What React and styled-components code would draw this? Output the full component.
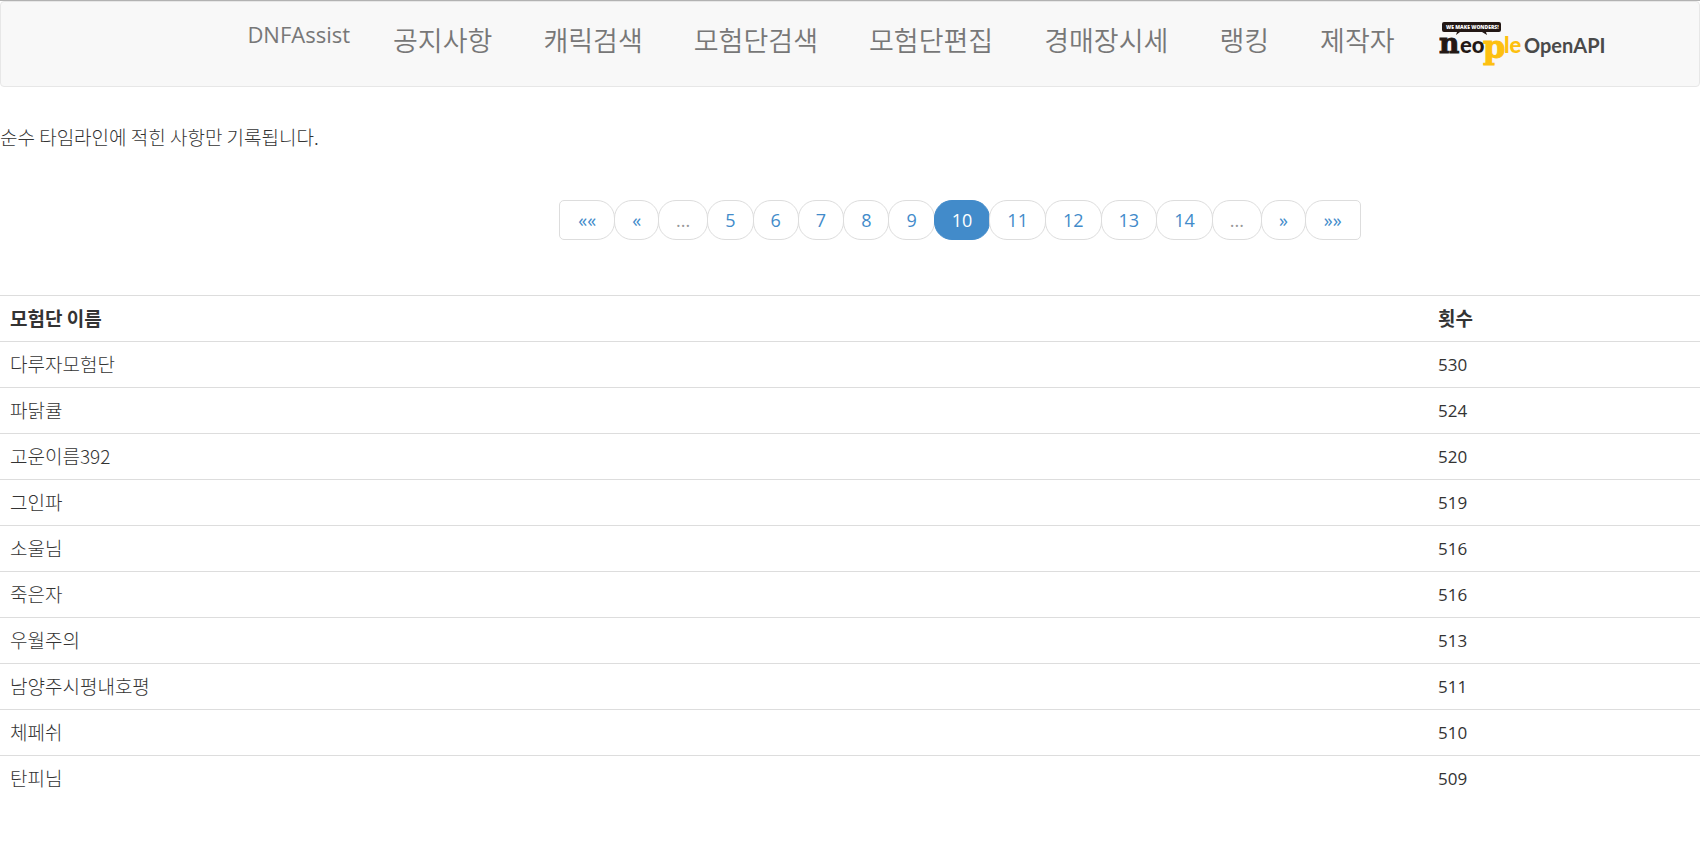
import styled, { createGlobalStyle } from 'styled-components'

const GlobalStyle = createGlobalStyle`
  * {
    box-sizing: border-box;
  }

  body {
    margin: 0;
    background-color: #fff;
    color: #333;
    font-family: "Noto Sans CJK KR", sans-serif;
    font-size: 19px;
    font-weight: 300;
    line-height: 25px;
  }

  a {
    text-decoration: none;
  }
`

const Page = styled.div`
  border-top: 1px solid #b2b2b2;
`

const Nav = styled.nav`
  display: flex;
  justify-content: center;
  padding-left: 152px;
  height: 86px;
  border: 1px solid #e7e7e7;
  border-radius: 4px;
  background-color: #f8f8f8;
`

const Brand = styled.a`
  padding: 17px 18px 0 0;
  color: #777;
  font-family: "Open Sans", sans-serif;
  font-size: 22px;
  font-weight: 400;
  line-height: 30px;
`

const Menu = styled.ul`
  display: flex;
  gap: 1px;
  margin: 0;
  padding: 0;
  list-style: none;
`

const MenuLink = styled.a`
  display: block;
  padding: 18px 25px;
  color: #777;
  font-size: 27px;
  font-weight: 350;
  line-height: 40px;
`

const LogoLink = styled.a`
  padding-top: 18px;
  margin-left: 19px;
`

const Notice = styled.p`
  margin: 37px 0 51px;
`

const Pages = styled.nav`
  display: flex;
  justify-content: center;
  padding-left: 220px;
  margin-bottom: 55px;
`

const PageList = styled.ul`
  display: flex;
  margin: 0;
  padding: 0;
  list-style: none;
`

const PageItem = styled.li`
  & + & {
    margin-left: -1px;
  }

  &:first-child button {
    padding: 0 18px;
    border-top-left-radius: 5px;
    border-bottom-left-radius: 5px;
  }

  &:last-child button {
    padding: 0 18px;
    border-top-right-radius: 5px;
    border-bottom-right-radius: 5px;
  }
`

const PageButton = styled.button`
  height: 40px;
  padding: 0 17px;
  border: 1px solid ${props => props.$active ? '#428bca' : '#ddd'};
  border-radius: 18px;
  background-color: ${props => props.$active ? '#428bca' : '#fff'};
  color: ${props => props.$active ? '#fff' : '#428bca'};
  font-family: "Open Sans", sans-serif;
  font-size: 18px;
  line-height: 25px;
  cursor: pointer;

  &:disabled {
    color: #999;
    cursor: default;
  }
`

const Table = styled.table`
  width: 100%;
  border-collapse: collapse;
  table-layout: fixed;
`

const Th = styled.th`
  width: ${props => props.$width};
  padding: 9px 10px 11px;
  border-top: 1px solid #ddd;
  font-weight: 700;
  text-align: left;
`

const Td = styled.td`
  padding: 9px 10px 11px;
  border-top: 1px solid #ddd;
`

const CountTd = styled(Td)`
  padding: 10px;
  font-family: "Open Sans", sans-serif;
  font-size: 17px;
  font-weight: 400;
`

const menus = ['공지사항', '캐릭검색', '모험단검색', '모험단편집', '경매장시세', '랭킹', '제작자']

const pages = ['««', '«', '...', '5', '6', '7', '8', '9', '10', '11', '12', '13', '14', '...', '»', '»»']

const guilds = [
  { name: '다루자모험단', count: 530 },
  { name: '파닭큘', count: 524 },
  { name: '고운이름392', count: 520 },
  { name: '그인파', count: 519 },
  { name: '소울님', count: 516 },
  { name: '죽은자', count: 516 },
  { name: '우월주의', count: 513 },
  { name: '남양주시평내호평', count: 511 },
  { name: '체페쉬', count: 510 },
  { name: '탄피님', count: 509 },
]

const NeopleLogo = () => {
  return (
    <svg width="166" height="50" viewBox="0 0 166 50" role="img" aria-label="Neople OpenAPI">
      <path d="M5 2h55q2 0 2 2v6q0 2-2 2h-13l1 3-5-3H21l-4 3 1-3H5q-2 0-2-2V4q0-2 2-2z" fill="#231815" />
      <text x="7" y="9" fontFamily="Open Sans" fontSize="5" fontWeight="800" fill="#fff">WE MAKE WONDERS!</text>
      <text x="0" y="33" fontFamily="DejaVu Serif" fontSize="28" fontWeight="700" fill="#231815" stroke="#231815">n</text>
      <text x="21" y="33" fontFamily="Lato" fontSize="22" fontWeight="900" fill="#231815">eo</text>
      <text x="44" y="38" fontFamily="DejaVu Serif" fontSize="32" fontWeight="700" fill="#fdc010" stroke="#fdc010">p</text>
      <text x="65" y="33" fontFamily="Lato" fontSize="22" fontWeight="900" fill="#fdc010">le</text>
      <text x="85" y="33" fontFamily="Lato" fontSize="20" fontWeight="700" fill="#4a4a4a">OpenAPI</text>
    </svg>
  )
}

const App = () => {
  return (
    <Page>
      <GlobalStyle />
      <Nav>
        <Brand href="#">DNFAssist</Brand>
        <Menu>
          {menus.map(menu => (
            <li key={menu}>
              <MenuLink href="#">{menu}</MenuLink>
            </li>
          ))}
        </Menu>
        <LogoLink href="#">
          <NeopleLogo />
        </LogoLink>
      </Nav>
      <Notice>순수 타임라인에 적힌 사항만 기록됩니다.</Notice>
      <Pages>
        <PageList>
          {pages.map((page, index) => (
            <PageItem key={index}>
              <PageButton $active={page === '10'} disabled={page === '...'}>{page}</PageButton>
            </PageItem>
          ))}
        </PageList>
      </Pages>
      <Table>
        <thead>
          <tr>
            <Th $width="84%">모험단 이름</Th>
            <Th>횟수</Th>
          </tr>
        </thead>
        <tbody>
          {guilds.map(guild => (
            <tr key={guild.name}>
              <Td>{guild.name}</Td>
              <CountTd>{guild.count}</CountTd>
            </tr>
          ))}
        </tbody>
      </Table>
    </Page>
  )
}

export default App
